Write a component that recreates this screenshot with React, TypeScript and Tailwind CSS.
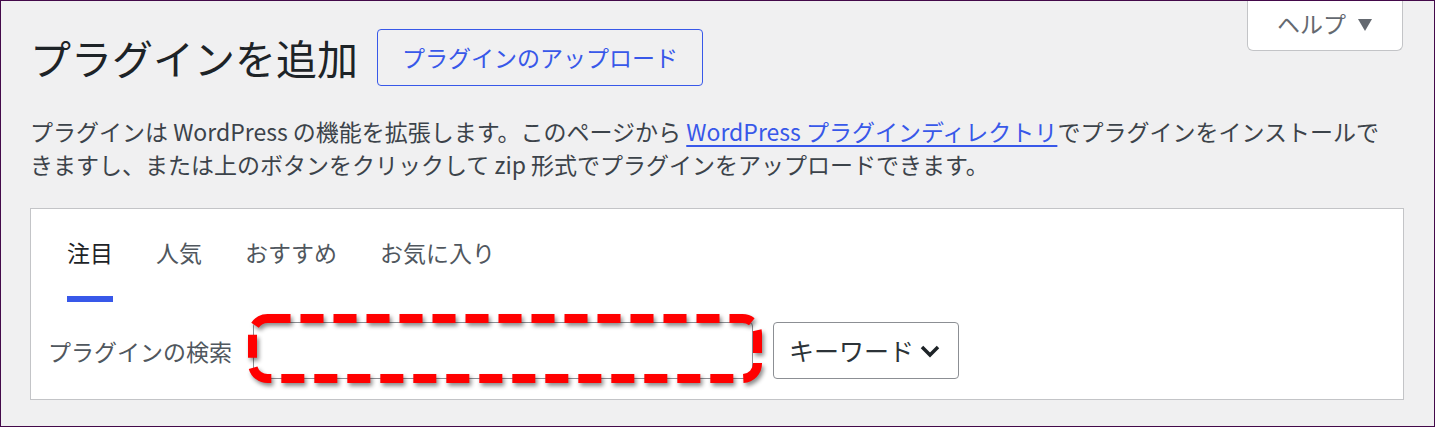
import React from "react";

const FONT = { fontFamily: '"Noto Sans CJK JP", "Noto Sans", sans-serif' };

export default function App() {
  return (
    <div
      style={FONT}
      className="w-[1435px] h-[427px] border border-[#43094a] bg-[#f0f0f1] pl-[29px] pr-[30px] overflow-hidden text-[#3c434a]"
    >
      <div className="flex justify-between items-start">
        <div className="flex items-center mt-[28px] gap-[19px]">
          <h1 className="text-[41px] leading-[57px] text-[#1d2327] font-normal">
            プラグインを追加
          </h1>
          <button className="h-[57px] px-[24px] border border-[#3858e9] rounded-[4px] text-[23px] text-[#3858e9] bg-transparent leading-none">
            プラグインのアップロード
          </button>
        </div>
        <button className="mr-[1px] h-[50px] w-[156px] bg-white border-x border-b border-[#c3c4c7] rounded-b-[6px] flex items-center pl-[29px] gap-[12px] text-[23px] text-[#646970] pb-[4px]">
          <span>ヘルプ</span>
          <svg width="14" height="12" viewBox="0 0 14 12" className="mt-[3px]">
            <polygon points="0,0 14,0 7,12" fill="#646970" />
          </svg>
        </button>
      </div>

      <p className="mt-[29px] text-[23px] leading-[33px] text-[#3c434a] whitespace-nowrap">
        プラグインは WordPress の機能を拡張します。このページから{" "}
        <a className="text-[#3858e9] underline underline-offset-[4px]" href="#">
          WordPress プラグインディレクトリ
        </a>
        でプラグインをインストールで
        <br />
        きますし、または上のボタンをクリックして zip 形式でプラグインをアップロードできます。
      </p>

      <div className="mt-[27px] bg-white border border-[#c3c4c7] px-[17px] pb-[20px]">
        <ul className="flex gap-[43px] ml-[19px] text-[23px] leading-[34px]">
          <li className="pt-[26px] pb-[27px] border-b-[6px] border-[#3858e9] text-[#1d2327]">注目</li>
          <li className="pt-[26px] pb-[27px] border-b-[6px] border-transparent text-[#50575e]">人気</li>
          <li className="pt-[26px] pb-[27px] border-b-[6px] border-transparent text-[#50575e]">おすすめ</li>
          <li className="pt-[26px] pb-[27px] border-b-[6px] border-transparent text-[#50575e]">お気に入り</li>
        </ul>

        <div className="mt-[20px] flex items-center">
          <label className="text-[23px] text-[#50575e] mr-[21px] leading-[34px]">プラグインの検索</label>
          <div className="relative">
            <div className="w-[500px] h-[57px] border border-[#8c8f94] rounded-[4px] bg-white" />
            <svg
              width="514"
              height="69"
              viewBox="0 0 514 69"
              className="absolute left-[-5px] top-[-8px] drop-shadow-[2px_3px_2px_rgba(0,0,0,0.45)]"
            >
              <rect
                x="4.5"
                y="4.5"
                width="505"
                height="60"
                rx="15"
                fill="none"
                stroke="#ff0000"
                strokeWidth="9"
                strokeDasharray="23 10"
              />
            </svg>
          </div>
          <button className="ml-[20px] h-[57px] w-[186px] border border-[#8c8f94] rounded-[4px] bg-white flex items-center pl-[15px] gap-[6px] text-[25px] text-[#2c3338]">
            <span>キーワード</span>
            <svg width="20" height="13" viewBox="0 0 20 13" className="mt-[2px]">
              <polyline points="2,2 10,10 18,2" fill="none" stroke="#1d2327" strokeWidth="3.5" />
            </svg>
          </button>
        </div>
      </div>
    </div>
  );
}
